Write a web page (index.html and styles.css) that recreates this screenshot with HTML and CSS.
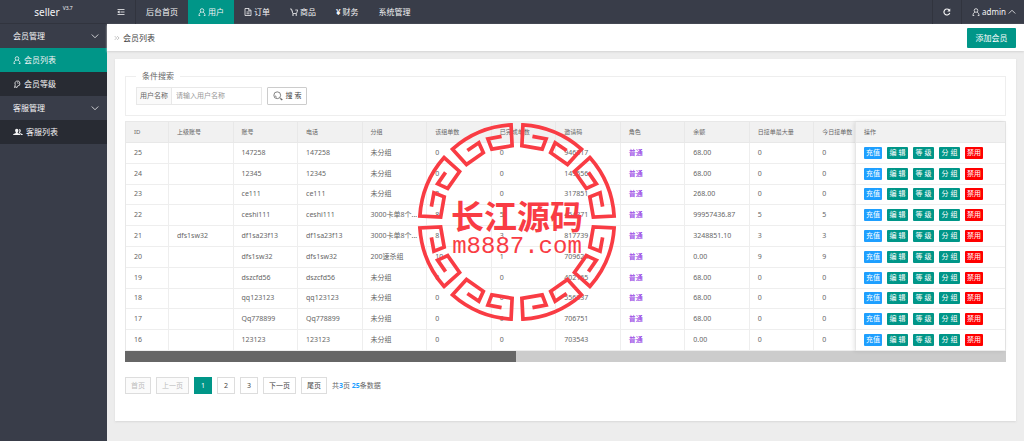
FILE: index.html
```html
<!DOCTYPE html>
<html lang="zh-CN">
<head>
<meta charset="utf-8">
<title>会员列表</title>
<link rel="stylesheet" href="styles.css">
</head>
<body>
<svg class="defs" aria-hidden="true">
  <symbol id="i-user" viewBox="0 0 16 16"><circle cx="8" cy="5" r="3.6"/><path d="M2 15c0-3.500 1.800-6 4-6.800M14 15c0-3.500-1.800-6-4-6.800M1.500 15h3M11.500 15h3"/></symbol>
  <symbol id="i-down" viewBox="0 0 16 16"><path d="M1.500 5 8 11.500 14.500 5"/></symbol>
  <symbol id="i-up" viewBox="0 0 16 16"><path d="M1.500 11 8 4.500 14.500 11"/></symbol>
  <symbol id="unit" viewBox="-100 -100 200 200"><path d="M18.500-85 4.900-87.900 4.600-76.900 24.700-72.400 31.700-92A97.300 97.300 0 0 0-31.700-92L-24.700-72.400-4.600-76.900-4.900-87.900-18.500-85"/></symbol>
</svg>
<div class="app">
  <aside class="side">
    <div class="logo">seller<sup>V3.7</sup></div>
    <nav class="menu">
      <a class="group" href="#">会员管理<svg class="icon chev"><use href="#i-down"/></svg></a>
      <a class="item active" href="#"><svg class="icon"><use href="#i-user"/></svg>会员列表</a>
      <a class="item" href="#"><svg class="icon" viewBox="0 0 16 16"><path d="M4.500 9.500A5 5 0 1 1 9 12M4.500 9.500 3 15l3-1.500L7.500 15.500 9 12M8 5.500l3 1"/></svg>会员等级</a>
      <a class="group" href="#">客服管理<svg class="icon chev"><use href="#i-down"/></svg></a>
      <a class="item" href="#"><svg class="icon wide solid" viewBox="0 0 20 16"><path d="M7.500 1.500c2.200 0 3.300 1.600 3.300 3.700 0 1.500-.7 2.900-1.500 3.600v1.400l4.700 2c.6.300.8.800.8 1.800H.3c0-1 .2-1.500.8-1.800l4.600-2V8.800c-.8-.7-1.500-2.100-1.500-3.600 0-2.100 1.100-3.700 3.300-3.700z"/><path d="M12.300 2c2 0 3.200 1.400 3.200 3.400 0 1.400-.6 2.600-1.300 3.300v1.400l4.300 1.800c.8.300 1 .9 1 2.100h-3.400c0-1.500-.6-2.300-1.600-2.700l-3-1.300c1.200-2 2-5.500.8-8z"/></svg>客服列表</a>
    </nav>
  </aside>
  <div class="main">
    <header class="top">
      <a class="tab bordered" href="#" aria-label="菜单"><svg class="icon" viewBox="0 0 16 16"><path d="M1 3h14M7 8h8M1 13h14M4.500 5.800v4.400L1.500 8z"/></svg></a>
      <a class="tab" href="#">后台首页</a>
      <a class="tab active" href="#"><svg class="icon"><use href="#i-user"/></svg>用户</a>
      <a class="tab" href="#"><svg class="icon" viewBox="0 0 16 16"><path d="M2 1h8l4 4v10H2zM9.500 1v4.500H14M5 8h6M5 11.500h6"/></svg>订单</a>
      <a class="tab" href="#"><svg class="icon" viewBox="0 0 16 16"><path d="M0 2h3l2.500 9H13l2.500-7h-5M4 5l1 2"/><circle cx="6" cy="14" r="1"/><circle cx="12.500" cy="14" r="1"/></svg>商品</a>
      <a class="tab" href="#"><b>¥</b>财务</a>
      <a class="tab" href="#">系统管理</a>
      <span class="grow"></span>
      <a class="tab edge" href="#" aria-label="刷新"><svg class="icon bold" viewBox="0 0 16 16"><path d="M13.500 10A6 6 0 1 1 12.500 4.200"/><path class="fill" d="M14.500 1v6h-6z"/></svg></a>
      <a class="tab edge user" href="#"><svg class="icon"><use href="#i-user"/></svg>admin<svg class="icon"><use href="#i-up"/></svg></a>
    </header>
    <div class="crumb">
      <svg class="icon" viewBox="0 0 16 16"><path d="m2 3 5 5-5 5M8.500 3l5 5-5 5"/></svg>
      <h1>会员列表</h1>
      <button class="add" type="button">添加会员</button>
    </div>
    <section class="card">
      <fieldset class="search">
        <legend>条件搜索</legend>
        <form class="form">
          <label for="name">用户名称</label>
          <input id="name" type="text" placeholder="请输入用户名称">
          <button type="button"><svg class="icon" viewBox="0 0 20 20"><circle cx="8.500" cy="8.500" r="6.800"/><path d="m13.500 13.500 2.500 2M4.500 9a4 4 0 0 0 3 3.500"/><path class="thick" d="m15.500 15.500 3 2.500"/></svg>搜 索</button>
        </form>
      </fieldset>
      <div class="grid">
        <div class="scroll">
          <table class="data">
            <thead><tr><th class="id">ID</th><th>上级账号</th><th>账号</th><th>电话</th><th>分组</th><th>该组单数</th><th>已完成单数</th><th>邀请码</th><th>角色</th><th>余额</th><th>日接单最大量</th><th>今日接单数</th></tr></thead>
            <tbody>
              <tr><td>25</td><td></td><td>147258</td><td>147258</td><td>未分组</td><td>0</td><td>0</td><td>946317</td><td class="role">普通</td><td>68.00</td><td>0</td><td>0</td></tr>
              <tr><td>24</td><td></td><td>12345</td><td>12345</td><td>未分组</td><td>0</td><td>0</td><td>149556</td><td class="role">普通</td><td>68.00</td><td>0</td><td>0</td></tr>
              <tr><td>23</td><td></td><td>ce111</td><td>ce111</td><td>未分组</td><td>0</td><td>0</td><td>317851</td><td class="role">普通</td><td>268.00</td><td>0</td><td>0</td></tr>
              <tr><td>22</td><td></td><td>ceshi111</td><td>ceshi111</td><td>3000卡单8个...</td><td>8</td><td>5</td><td>454371</td><td class="role">普通</td><td>99957436.87</td><td>5</td><td>5</td></tr>
              <tr><td>21</td><td>dfs1sw32</td><td>df1sa23f13</td><td>df1sa23f13</td><td>3000卡单8个...</td><td>8</td><td>3</td><td>817739</td><td class="role">普通</td><td>3248851.10</td><td>3</td><td>3</td></tr>
              <tr><td>20</td><td></td><td>dfs1sw32</td><td>dfs1sw32</td><td>200速杀组</td><td>10</td><td>1</td><td>709624</td><td class="role">普通</td><td>0.00</td><td>9</td><td>9</td></tr>
              <tr><td>19</td><td></td><td>dszcfd56</td><td>dszcfd56</td><td>未分组</td><td>0</td><td>0</td><td>402165</td><td class="role">普通</td><td>68.00</td><td>0</td><td>0</td></tr>
              <tr><td>18</td><td></td><td>qq123123</td><td>qq123123</td><td>未分组</td><td>0</td><td>0</td><td>556337</td><td class="role">普通</td><td>68.00</td><td>0</td><td>0</td></tr>
              <tr><td>17</td><td></td><td>Qq778899</td><td>Qq778899</td><td>未分组</td><td>0</td><td>0</td><td>706751</td><td class="role">普通</td><td>68.00</td><td>0</td><td>0</td></tr>
              <tr><td>16</td><td></td><td>123123</td><td>123123</td><td>未分组</td><td>0</td><td>0</td><td>703543</td><td class="role">普通</td><td>0.00</td><td>0</td><td>0</td></tr>
            </tbody>
          </table>
        </div>
        <table class="data ops">
          <thead><tr><th>操作</th></tr></thead>
          <tbody>
            <tr><td><div class="acts"><button class="blue">充值</button><button>编 辑</button><button>等 级</button><button>分 组</button><button class="red">禁用</button></div></td></tr>
            <tr><td><div class="acts"><button class="blue">充值</button><button>编 辑</button><button>等 级</button><button>分 组</button><button class="red">禁用</button></div></td></tr>
            <tr><td><div class="acts"><button class="blue">充值</button><button>编 辑</button><button>等 级</button><button>分 组</button><button class="red">禁用</button></div></td></tr>
            <tr><td><div class="acts"><button class="blue">充值</button><button>编 辑</button><button>等 级</button><button>分 组</button><button class="red">禁用</button></div></td></tr>
            <tr><td><div class="acts"><button class="blue">充值</button><button>编 辑</button><button>等 级</button><button>分 组</button><button class="red">禁用</button></div></td></tr>
            <tr><td><div class="acts"><button class="blue">充值</button><button>编 辑</button><button>等 级</button><button>分 组</button><button class="red">禁用</button></div></td></tr>
            <tr><td><div class="acts"><button class="blue">充值</button><button>编 辑</button><button>等 级</button><button>分 组</button><button class="red">禁用</button></div></td></tr>
            <tr><td><div class="acts"><button class="blue">充值</button><button>编 辑</button><button>等 级</button><button>分 组</button><button class="red">禁用</button></div></td></tr>
            <tr><td><div class="acts"><button class="blue">充值</button><button>编 辑</button><button>等 级</button><button>分 组</button><button class="red">禁用</button></div></td></tr>
            <tr><td><div class="acts"><button class="blue">充值</button><button>编 辑</button><button>等 级</button><button>分 组</button><button class="red">禁用</button></div></td></tr>
          </tbody>
        </table>
        <svg class="stamp" viewBox="-100 -100 200 200">
          <g class="ring">
            <use href="#unit" x="-100" y="-100" width="200" height="200" transform="rotate(22.500)"/>
            <use href="#unit" x="-100" y="-100" width="200" height="200" transform="rotate(67.500)"/>
            <use href="#unit" x="-100" y="-100" width="200" height="200" transform="rotate(112.500)"/>
            <use href="#unit" x="-100" y="-100" width="200" height="200" transform="rotate(157.500)"/>
            <use href="#unit" x="-100" y="-100" width="200" height="200" transform="rotate(202.500)"/>
            <use href="#unit" x="-100" y="-100" width="200" height="200" transform="rotate(247.500)"/>
            <use href="#unit" x="-100" y="-100" width="200" height="200" transform="rotate(292.500)"/>
            <use href="#unit" x="-100" y="-100" width="200" height="200" transform="rotate(337.500)"/>
          </g>
          <text class="name" x="0" y="7">长江源码</text>
          <text class="url" x="0" y="31">m8887.com</text>
        </svg>
      </div>
      <div class="bar"><div class="thumb"></div></div>
      <nav class="pages">
        <button disabled>首页</button><button disabled>上一页</button><button class="on">1</button><button>2</button><button>3</button><button>下一页</button><button>尾页</button>
        <span>共<b>3</b>页 <b>25</b>条数据</span>
      </nav>
    </section>
  </div>
</div>
</body>
</html>
```

FILE: styles.css
```css
* { box-sizing: border-box; }
body {
  margin: 0;
  background: #ededed;
  color: #666;
  font: 7px/10px "Noto Sans", "Noto Sans CJK SC", sans-serif;
}
a { color: inherit; text-decoration: none; }
button, input { font: inherit; margin: 0; }
.defs { position: absolute; width: 0; height: 0; }
.icon {
  width: 8px;
  height: 8px;
  flex: none;
  fill: none;
  stroke: currentColor;
  stroke-width: 1.6;
}
.icon.wide { width: 10px; }
.icon.solid { fill: currentColor; stroke: none; }
.icon.bold { stroke-width: 2.4; }
.icon .fill { fill: currentColor; stroke: none; }

.app { display: flex; min-height: 100vh; }
.side {
  width: 107px;
  flex: none;
  background: #393d49;
  color: #f4f4f5;
  font-size: 8px;
}
.logo {
  height: 24px;
  display: flex;
  align-items: center;
  justify-content: center;
  gap: 3px;
  border-bottom: 1px solid #31343e;
  font-size: 10px;
}
.logo sup { font-size: 5px; line-height: 16px; align-self: flex-start; }
.menu a {
  display: flex;
  align-items: center;
  height: 24px;
  padding: 0 8px 0 13px;
}
.menu .chev { margin-left: auto; }
.menu .item { background: #282b33; gap: 3px; }
.menu .item.active { background: #009688; }

.main { flex: 1; min-width: 0; }
.top {
  display: flex;
  height: 24px;
  background: #393d49;
  color: #f4f4f5;
  font-size: 8px;
}
.tab {
  display: flex;
  align-items: center;
  gap: 2px;
  padding: 0 10px;
}
.tab.active { background: #009688; }
.tab.bordered { border-right: 1px solid #31343e; }
.tab.edge { border-left: 1px solid #31343e; }
.tab.user { padding-right: 8px; }
.grow { flex: 1; }

.crumb {
  display: flex;
  align-items: center;
  gap: 3px;
  height: 27px;
  padding: 0 8px 0 7px;
  background: #fff;
  box-shadow: 0 1px 2px #d4d4d4;
}
.crumb h1 { margin: 0; font-size: 8px; font-weight: 400; color: #444; }
.crumb .icon { width: 6px; height: 6px; color: #999; }
.add {
  margin-left: auto;
  width: 49px;
  height: 20px;
  padding: 0;
  border: 0;
  border-radius: 1px;
  background: #009688;
  color: #fff;
  font-size: 8px;
}

.card {
  margin: 8px;
  padding: 12px 10px 27px;
  background: #fff;
  box-shadow: 0 1px 2px #d8d8d8;
}
.search { margin: 0; padding: 6px 10px 10px; border: 1px solid #eee; }
.search legend { padding: 0 6px; font-size: 8px; line-height: 10px; }
.form { display: flex; height: 18px; }
.form label {
  width: 36px;
  border: 1px solid #e8e8e8;
  background: #fafafa;
  line-height: 16px;
  text-align: center;
}
.form input {
  width: 90px;
  padding: 0 4px;
  border: 1px solid #e8e8e8;
  border-left: 0;
  background: #fff;
  color: #666;
  outline: 0;
}
.form input::placeholder { color: #999; }
.form button {
  display: flex;
  align-items: center;
  justify-content: center;
  gap: 3px;
  width: 40px;
  margin-left: 5px;
  padding: 0;
  border: 1px solid #ccc;
  border-radius: 1px;
  background: #fff;
  color: #444;
}
.form .icon { width: 10px; height: 10px; color: #666; }
.form .thick { stroke-width: 3; }

.grid {
  position: relative;
  display: flex;
  margin-top: 5px;
  border: 1px solid #e8e8e8;
  border-bottom: 0;
}
.scroll { flex: 1; min-width: 0; overflow: hidden; }
.data {
  width: 100%;
  min-width: 753px;
  height: 229px;
  border-collapse: separate;
  border-spacing: 0;
  table-layout: fixed;
}
.data.ops {
  position: relative;
  width: 150px;
  min-width: 0;
  flex: none;
  background: #fff;
  border-left: 1px solid #e6e6e6;
  box-shadow: -1px 0 4px rgba(0, 0, 0, .1);
}
.data th, .data td {
  padding: 0 0 0 8px;
  border-right: 1px solid #eee;
  border-bottom: 1px solid #eee;
  text-align: left;
  font-weight: 400;
  white-space: nowrap;
}
.data th { height: 21px; background: #f1f1f1; border-color: #e8e8e8; font-size: 6px; }
.data .id { width: 43px; }
.data .role { color: #8a2be2; }
.data.ops th, .data.ops td { border-right: 0; }
.acts { display: flex; gap: 5px; }
.acts button {
  width: 21px;
  height: 12px;
  padding: 0;
  border: 0;
  border-radius: 1px;
  background: #009688;
  color: #fff;
  line-height: 12px;
}
.acts .blue, .acts .red { width: 18px; }
.acts .blue { background: #1e9fff; }
.acts .red { background: #f00; }

.stamp {
  position: absolute;
  left: 291px;
  top: 0;
  width: 200px;
  height: 200px;
  overflow: visible;
  pointer-events: none;
}
.ring { fill: none; stroke: #f93c44; stroke-width: 3.7; }
.stamp text { fill: #f93c44; text-anchor: middle; }
.stamp .name { font: 700 33px "Noto Sans CJK SC", sans-serif; }
.stamp .url { font: 24px "Liberation Mono", monospace; }

.bar { height: 11px; background: #ccc; }
.thumb { width: 391px; height: 100%; background: #666; }
.pages {
  display: flex;
  align-items: center;
  gap: 5px;
  margin-top: 15px;
}
.pages button {
  min-width: 18px;
  height: 17px;
  padding: 0 5px;
  border: 1px solid #ddd;
  background: #fff;
  color: #444;
}
.pages button:disabled { background: #fbfbfb; color: #bbb; }
.pages .on { border-color: #009688; background: #009688; color: #fff; }
.pages b { color: #1e9fff; }
```
